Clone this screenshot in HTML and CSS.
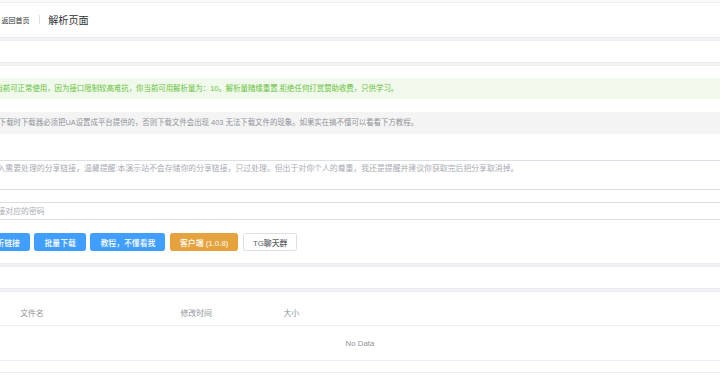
FILE: index.html
```html
<!DOCTYPE html>
<html lang="zh-CN">
<head>
<meta charset="utf-8">
<title>解析页面</title>
<link rel="stylesheet" href="styles.css">
</head>
<body>
<div class="page">
  <header class="card page-header">
    <div class="ph-back">
      <span class="ph-icon">
        <svg width="16" height="16" viewBox="0 0 16 16" fill="none" stroke="#303133" stroke-width="1.6" stroke-linecap="round" stroke-linejoin="round"><path d="M13 8H3M7.5 3.5 3 8l4.5 4.5"/></svg>
      </span>
      <span class="ph-title">返回首页</span>
    </div>
    <span class="ph-divider"></span>
    <div class="ph-content">解析页面</div>
  </header>

  <section class="card card-empty"></section>

  <main class="card card-main">
    <div class="alert alert-success">当前可正常使用，因为接口限制较高难抗，你当前可用解析量为：10。解析量随缘重置,拒绝任何打赏赞助收费，只供学习。</div>
    <div class="alert alert-info">下载时下载器必须把UA设置成平台提供的，否则下载文件会出现 403 无法下载文件的现象。如果实在搞不懂可以看看下方教程。</div>
    <textarea class="textarea" rows="2" placeholder="输入需要处理的分享链接，温馨提醒:本演示站不会存储你的分享链接，只过处理。但出于对你个人的尊重，我还是提醒并建议你获取完后把分享取消掉。"></textarea>
    <input class="input" type="text" placeholder="链接对应的密码">
    <div class="actions">
      <button class="btn btn-primary">解析链接</button>
      <button class="btn btn-primary">批量下载</button>
      <button class="btn btn-primary">教程，不懂看我</button>
      <button class="btn btn-warning">客户端 (1.0.8)</button>
      <button class="btn btn-default">TG聊天群</button>
    </div>
  </main>

  <section class="card card-empty"></section>

  <section class="card card-table">
    <div class="table">
      <div class="thead">
        <div class="th"></div>
        <div class="th">文件名</div>
        <div class="th">修改时间</div>
        <div class="th">大小</div>
      </div>
      <div class="empty">No Data</div>
    </div>
  </section>
</div>
</body>
</html>
```
FILE: styles.css
```css
html {
  zoom: 0.5625;
}

body {
  margin: 0;
  background: #ffffff;
  overflow: hidden;
  font-family: "Liberation Sans", "Noto Sans CJK SC", sans-serif;
  color: #303133;
}

.page {
  margin: 3px -52px 0;
  display: flex;
  flex-direction: column;
  gap: 4px;
}

.card {
  background: #fff;
  border: 1px solid #ebeef5;
  border-radius: 4px;
  box-shadow: 0 0 10px rgba(0, 0, 0, 0.08);
  box-sizing: border-box;
}

/* page header */
.page-header {
  height: 64px;
  padding: 0 20px;
  display: flex;
  align-items: center;
}

.ph-back {
  display: flex;
  align-items: center;
}

.ph-icon {
  width: 16px;
  height: 16px;
  margin-right: 17px;
  display: flex;
}

.ph-title {
  font-size: 12.5px;
  color: #303133;
}

.ph-divider {
  width: 1px;
  height: 16px;
  background: #dcdfe6;
  margin: 0 16px;
}

.ph-content {
  font-size: 18px;
  color: #303133;
}

.card-empty {
  height: 41px;
}

/* main card */
.card-main {
  padding: 20px 19px 20px;
  display: flex;
  flex-direction: column;
}

.alert {
  height: 38px;
  box-sizing: border-box;
  padding: 0 16px;
  border-radius: 4px;
  font-size: 13.2px;
  line-height: 38px;
  white-space: nowrap;
}

.alert-success {
  background: #f0f9eb;
  color: #67c23a;
  padding-left: 23px;
}

.alert-info {
  margin-top: 24px;
  background: #f4f4f5;
  color: #909399;
  padding-left: 29px;
}

.textarea {
  display: block;
  margin-top: 46px;
  width: 100%;
  height: 54px;
  box-sizing: border-box;
  padding: 5px 11px;
  border: 1px solid #dcdfe6;
  border-radius: 4px;
  font-family: inherit;
  font-size: 14px;
  line-height: 1.5;
  resize: none;
  outline: none;
  color: #606266;
}

.input {
  display: block;
  margin-top: 22px;
  width: 100%;
  height: 32px;
  box-sizing: border-box;
  padding: 0 11px;
  border: 1px solid #dcdfe6;
  border-radius: 4px;
  font-family: inherit;
  font-size: 14px;
  outline: none;
  color: #606266;
}

.textarea::placeholder,
.input::placeholder {
  color: #a8abb2;
}

.actions {
  margin-top: 23px;
  margin-left: -7px;
  display: flex;
  gap: 8px;
}

.btn {
  height: 32px;
  padding: 0 16px;
  border: 1px solid transparent;
  border-radius: 4px;
  font-family: inherit;
  font-size: 14px;
  font-weight: 500;
  white-space: nowrap;
}

.btn-primary {
  background: #409eff;
  border-color: #409eff;
  color: #fff;
}

.btn-warning {
  background: #e6a23c;
  border-color: #e6a23c;
  color: #fff;
}

.btn-default {
  background: #fff;
  border-color: #dcdfe6;
  color: #606266;
}

/* table card */
.card-table {
  padding: 20px 19px;
}

.thead {
  display: grid;
  grid-template-columns: 55px 285px 183px 1fr;
  height: 41px;
  box-sizing: border-box;
  border-bottom: 1px solid #ebeef5;
}

.th {
  padding: 0 12px;
  font-size: 14px;
  line-height: 40px;
  color: #909399;
}

.empty {
  height: 61px;
  box-sizing: border-box;
  border-bottom: 1px solid #ebeef5;
  display: flex;
  align-items: center;
  justify-content: center;
  font-size: 14px;
  color: #909399;
}
```
